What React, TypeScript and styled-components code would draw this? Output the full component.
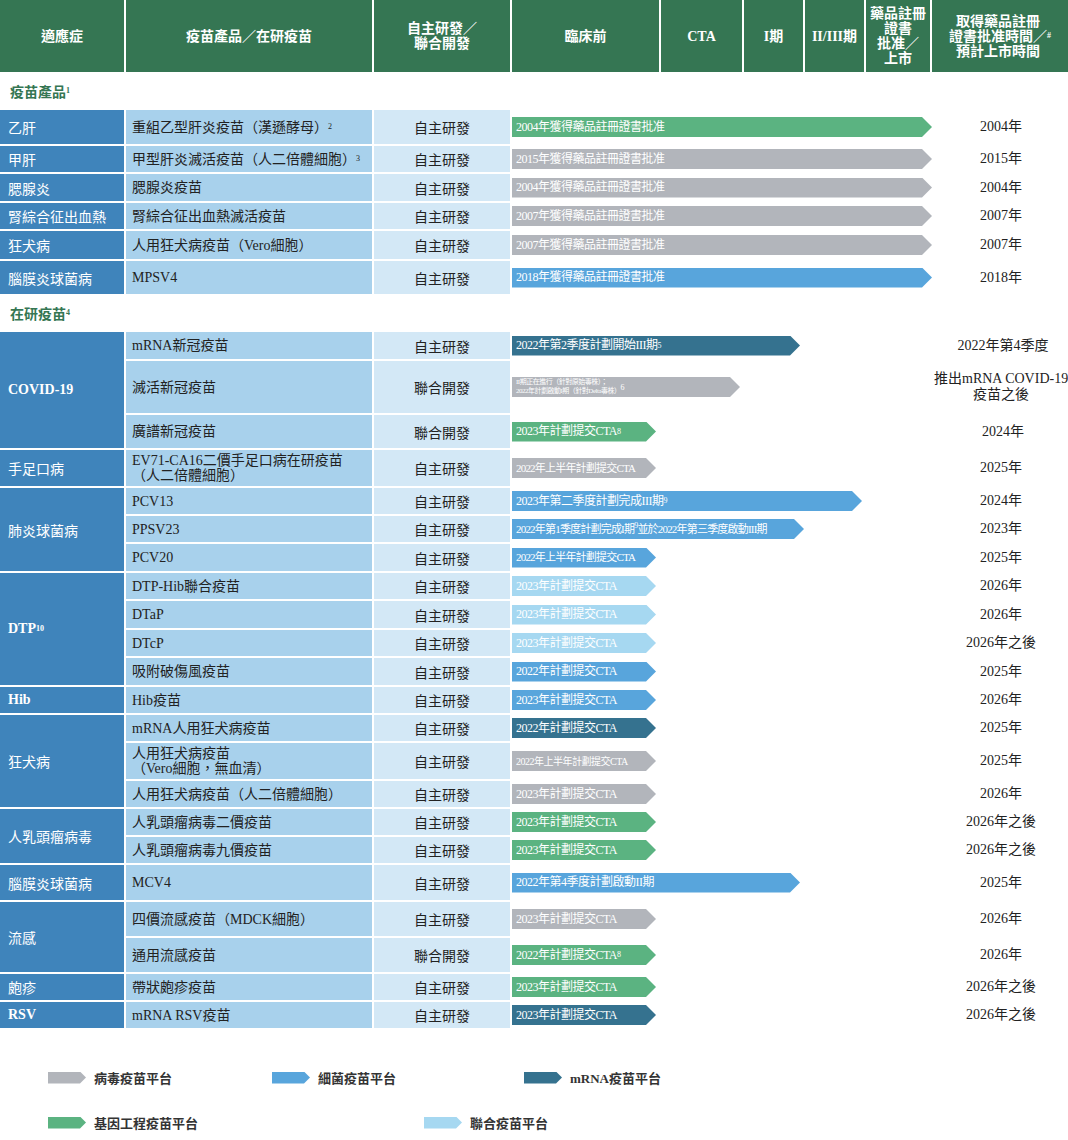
import * as React from 'react';
import styled, { createGlobalStyle } from 'styled-components';

const Global = createGlobalStyle`
  body { margin: 0; background: #fff; font-family: "Liberation Serif", "Noto Sans CJK TC", serif; }
  sup { font-size: 8px; vertical-align: super; line-height: 0; }
`;

const Page = styled.div`
  width: 1068px;
  display: flex;
  flex-direction: column;
`;

const Header = styled.div`
  display: grid;
  grid-template-columns: 124px 246px 136px 147px 81px 59px 59px 64px 1fr;
  column-gap: 2px;
  height: 72px;
`;

const HeadCell = styled.div`
  background: #357653;
  color: #fff;
  font-size: 14px;
  font-weight: bold;
  display: flex;
  align-items: center;
  justify-content: center;
  text-align: center;
  line-height: 15px;
`;

const SectionTitle = styled.div`
  color: #357653;
  font-weight: bold;
  font-size: 14px;
  padding: 0 0 0 10px;
  height: 38px;
  display: flex;
  align-items: center;
`;

const Body = styled.div`
  display: flex;
  flex-direction: column;
  gap: 2px;
`;

const Group = styled.div`
  display: grid;
  grid-template-columns: 124px 1fr;
  column-gap: 2px;
`;

const Indication = styled.div<{ $bold?: boolean }>`
  background: #3f84bb;
  color: #fff;
  font-size: 14px;
  font-weight: ${(p) => (p.$bold ? 'bold' : 'normal')};
  display: flex;
  align-items: center;
  padding-left: 8px;
`;

const Rows = styled.div`
  display: flex;
  flex-direction: column;
  gap: 2px;
`;

const Row = styled.div<{ $h: number }>`
  display: grid;
  grid-template-columns: 246px 136px 420px 1fr;
  column-gap: 2px;
  height: ${(p) => p.$h}px;
`;

const Product = styled.div`
  background: #a8d1ec;
  font-size: 14px;
  color: #222;
  display: flex;
  align-items: center;
  padding-left: 6px;
  line-height: 15px;
`;

const Dev = styled.div`
  background: #d3e8f6;
  font-size: 14px;
  color: #222;
  display: flex;
  align-items: center;
  justify-content: center;
`;

const Stage = styled.div`
  display: flex;
  align-items: center;
`;

const Bar = styled.div<{ $c: string; $w: number }>`
  background: ${(p) => p.$c};
  width: ${(p) => p.$w}px;
  height: 20px;
  clip-path: polygon(0 0, calc(100% - 10px) 0, 100% 50%, calc(100% - 10px) 100%, 0 100%);
  color: #fff;
  font-size: 12px;
  letter-spacing: -0.5px;
  display: flex;
  align-items: center;
  padding-left: 4px;
  box-sizing: border-box;
  white-space: nowrap;
  overflow: hidden;
  line-height: 9px;
`;

const Small = styled.span`
  font-size: 7px;
  line-height: 9px;
`;

const DateCell = styled.div`
  font-size: 14px;
  color: #222;
  display: flex;
  align-items: center;
  justify-content: center;
  text-align: center;
  line-height: 16px;
  white-space: nowrap;
`;

const Legend = styled.div`
  display: flex;
  flex-wrap: wrap;
  row-gap: 26px;
  padding: 40px 0 10px 48px;
`;

const LegendItem = styled.div<{ $w: number }>`
  width: ${(p) => p.$w}px;
  display: flex;
  align-items: center;
  gap: 8px;
  font-size: 13px;
  font-weight: bold;
  color: #333;
`;

const LegendArrow = styled.div<{ $c: string }>`
  width: 38px;
  height: 12px;
  background: ${(p) => p.$c};
  clip-path: polygon(0 0, calc(100% - 6px) 0, 100% 50%, calc(100% - 6px) 100%, 0 100%);
`;

const G = '#5bb381', GR = '#b2b5bb', B = '#58a5dc', D = '#35728f', L = '#a6d8f1';

type R = { h: number; p: React.ReactNode; d?: string; c: string; w: number; t: React.ReactNode; date: React.ReactNode };
type Grp = { name: React.ReactNode; bold?: boolean; rows: R[] };

const own = '自主研發';
const joint = '聯合開發';

const products: Grp[] = [
  { name: '乙肝', rows: [{ h: 34, p: <>重組乙型肝炎疫苗（漢遜酵母）<sup>2</sup></>, c: G, w: 420, t: '2004年獲得藥品註冊證書批准', date: '2004年' }] },
  { name: '甲肝', rows: [{ h: 26, p: <>甲型肝炎滅活疫苗（人二倍體細胞）<sup>3</sup></>, c: GR, w: 420, t: '2015年獲得藥品註冊證書批准', date: '2015年' }] },
  { name: '腮腺炎', rows: [{ h: 27, p: '腮腺炎疫苗', c: GR, w: 420, t: '2004年獲得藥品註冊證書批准', date: '2004年' }] },
  { name: '腎綜合征出血熱', rows: [{ h: 26, p: '腎綜合征出血熱滅活疫苗', c: GR, w: 420, t: '2007年獲得藥品註冊證書批准', date: '2007年' }] },
  { name: '狂犬病', rows: [{ h: 28, p: '人用狂犬病疫苗（Vero細胞）', c: GR, w: 420, t: '2007年獲得藥品註冊證書批准', date: '2007年' }] },
  { name: '腦膜炎球菌病', rows: [{ h: 33, p: 'MPSV4', c: B, w: 420, t: '2018年獲得藥品註冊證書批准', date: '2018年' }] },
];

const pipeline: Grp[] = [
  {
    name: 'COVID-19', bold: true, rows: [
      { h: 27, p: 'mRNA新冠疫苗', c: D, w: 288, t: <>2022年第2季度計劃開始III期<sup>5</sup></>, date: '2022年第4季度' },
      { h: 52, p: '滅活新冠疫苗', d: joint, c: GR, w: 228, t: <Small>II期正在進行（針對原始毒株）；<br />2022年計劃啟動I期（針對Delta毒株）<sup>6</sup></Small>, date: <>推出mRNA COVID-19<br />疫苗之後<sup>7</sup></> },
      { h: 33, p: '廣譜新冠疫苗', d: joint, c: G, w: 144, t: <>2023年計劃提交CTA<sup>8</sup></>, date: '2024年' },
    ],
  },
  { name: '手足口病', rows: [{ h: 36, p: <>EV71-CA16二價手足口病在研疫苗<br />（人二倍體細胞）</>, c: GR, w: 144, t: <span style={{ fontSize: 11, letterSpacing: -0.8 }}>2022年上半年計劃提交CTA</span>, date: '2025年' }] },
  {
    name: '肺炎球菌病', rows: [
      { h: 26, p: 'PCV13', c: B, w: 350, t: <>2023年第二季度計劃完成III期<sup>9</sup></>, date: '2024年' },
      { h: 26, p: 'PPSV23', c: B, w: 292, t: <span style={{ fontSize: 11, letterSpacing: -0.8 }}>2022年第1季度計劃完成I期<sup>9</sup>並於2022年第三季度啟動III期</span>, date: '2023年' },
      { h: 27, p: 'PCV20', c: B, w: 144, t: <span style={{ fontSize: 11, letterSpacing: -0.8 }}>2022年上半年計劃提交CTA</span>, date: '2025年' },
    ],
  },
  {
    name: <>DTP<sup>10</sup></>, bold: true, rows: [
      { h: 26, p: 'DTP-Hib聯合疫苗', c: L, w: 144, t: '2023年計劃提交CTA', date: '2026年' },
      { h: 27, p: 'DTaP', c: L, w: 144, t: '2023年計劃提交CTA', date: '2026年' },
      { h: 26, p: 'DTcP', c: L, w: 144, t: '2023年計劃提交CTA', date: '2026年之後' },
      { h: 27, p: '吸附破傷風疫苗', c: B, w: 144, t: '2022年計劃提交CTA', date: '2025年' },
    ],
  },
  { name: 'Hib', bold: true, rows: [{ h: 26, p: 'Hib疫苗', c: B, w: 144, t: '2023年計劃提交CTA', date: '2026年' }] },
  {
    name: '狂犬病', rows: [
      { h: 26, p: 'mRNA人用狂犬病疫苗', c: D, w: 144, t: '2022年計劃提交CTA', date: '2025年' },
      { h: 36, p: <>人用狂犬病疫苗<br />（Vero細胞，無血清）</>, c: GR, w: 144, t: <span style={{ fontSize: 10 }}>2022年上半年計劃提交CTA</span>, date: '2025年' },
      { h: 26, p: '人用狂犬病疫苗（人二倍體細胞）', c: GR, w: 144, t: '2023年計劃提交CTA', date: '2026年' },
    ],
  },
  {
    name: '人乳頭瘤病毒', rows: [
      { h: 26, p: '人乳頭瘤病毒二價疫苗', c: G, w: 144, t: '2023年計劃提交CTA', date: '2026年之後' },
      { h: 26, p: '人乳頭瘤病毒九價疫苗', c: G, w: 144, t: '2023年計劃提交CTA', date: '2026年之後' },
    ],
  },
  { name: '腦膜炎球菌病', rows: [{ h: 35, p: 'MCV4', c: B, w: 288, t: '2022年第4季度計劃啟動II期', date: '2025年' }] },
  {
    name: '流感', rows: [
      { h: 34, p: '四價流感疫苗（MDCK細胞）', c: GR, w: 144, t: '2023年計劃提交CTA', date: '2026年' },
      { h: 34, p: '通用流感疫苗', d: joint, c: G, w: 144, t: <>2022年計劃提交CTA<sup>8</sup></>, date: '2026年' },
    ],
  },
  { name: '皰疹', rows: [{ h: 26, p: '帶狀皰疹疫苗', c: G, w: 144, t: '2023年計劃提交CTA', date: '2026年之後' }] },
  { name: 'RSV', bold: true, rows: [{ h: 26, p: 'mRNA RSV疫苗', c: D, w: 144, t: '2023年計劃提交CTA', date: '2026年之後' }] },
];

const Table: React.FC<{ groups: Grp[] }> = ({ groups }) => (
  <Body>
    {groups.map((g, i) => (
      <Group key={i}>
        <Indication $bold={g.bold}>{g.name}</Indication>
        <Rows>
          {g.rows.map((r, j) => (
            <Row key={j} $h={r.h}>
              <Product>{r.p}</Product>
              <Dev>{r.d ?? own}</Dev>
              <Stage>
                <Bar $c={r.c} $w={r.w}>{r.t}</Bar>
              </Stage>
              <DateCell>{r.date}</DateCell>
            </Row>
          ))}
        </Rows>
      </Group>
    ))}
  </Body>
);

export default function App() {
  return (
    <Page>
      <Global />
      <Header>
        <HeadCell>適應症</HeadCell>
        <HeadCell>疫苗產品／在研疫苗</HeadCell>
        <HeadCell>自主研發／<br />聯合開發</HeadCell>
        <HeadCell>臨床前</HeadCell>
        <HeadCell>CTA</HeadCell>
        <HeadCell>I期</HeadCell>
        <HeadCell>II/III期</HeadCell>
        <HeadCell>藥品註冊<br />證書<br />批准／<br />上市</HeadCell>
        <HeadCell>取得藥品註冊<br />證書批准時間／<br />預計上市時間<sup>#</sup></HeadCell>
      </Header>
      <SectionTitle>疫苗產品<sup>1</sup></SectionTitle>
      <Table groups={products} />
      <SectionTitle>在研疫苗<sup>4</sup></SectionTitle>
      <Table groups={pipeline} />
      <Legend>
        <LegendItem $w={224}><LegendArrow $c={GR} />病毒疫苗平台</LegendItem>
        <LegendItem $w={252}><LegendArrow $c={B} />細菌疫苗平台</LegendItem>
        <LegendItem $w={240}><LegendArrow $c={D} />mRNA疫苗平台</LegendItem>
        <LegendItem $w={376}><LegendArrow $c={G} />基因工程疫苗平台</LegendItem>
        <LegendItem $w={240}><LegendArrow $c={L} />聯合疫苗平台</LegendItem>
      </Legend>
    </Page>
  );
}
